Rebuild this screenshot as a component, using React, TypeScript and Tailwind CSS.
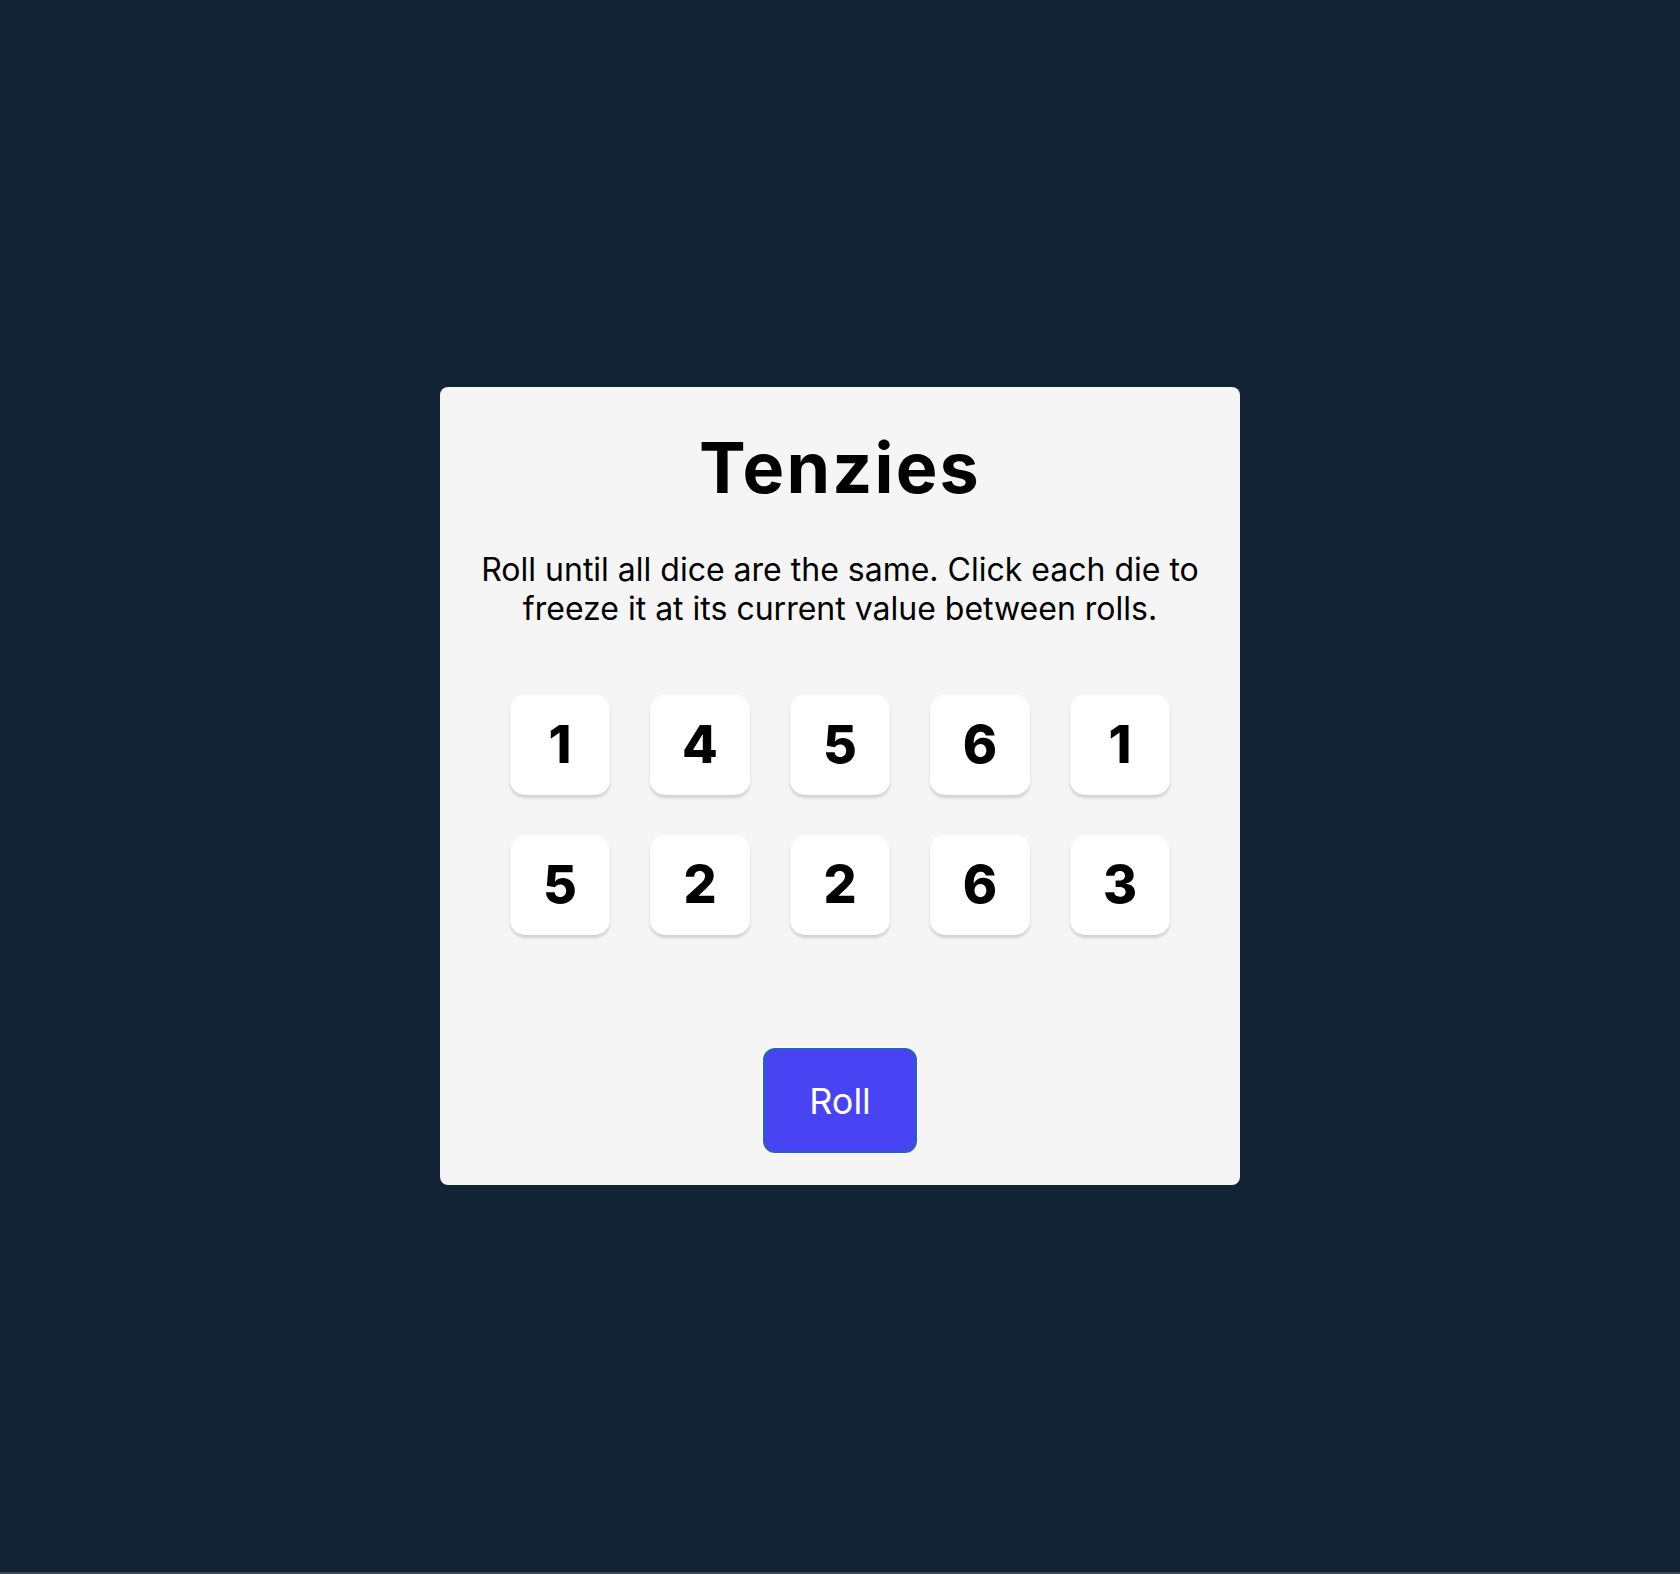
import React from 'react';

const dice = [1, 4, 5, 6, 1, 5, 2, 2, 6, 3];

export default function App() {
  return (
    <div className="min-h-[1574px] bg-[#3b4650] font-['Inter',sans-serif]">
      <main className="h-[1572px] bg-[#112334] flex items-center justify-center">
        <div className="w-[800px] bg-[#f5f5f5] rounded-lg flex flex-col items-center pt-[46px] pb-[32px]">
          <h1 className="text-[70px] leading-none font-bold tracking-[2.2px] text-black">Tenzies</h1>
          <p className="mt-[47px] text-[32px] leading-[39px] text-center text-black max-w-[750px]">
            Roll until all dice are the same. Click each die to freeze it at its current value between rolls.
          </p>
          <div className="mt-[67px] grid grid-cols-5 gap-[40px]">
            {dice.map((d, i) => (
              <button
                key={i}
                className="w-[100px] h-[100px] bg-white rounded-[15px] shadow-[0_3px_3px_rgba(0,0,0,0.15)] flex items-center justify-center text-[52px] font-extrabold text-black"
              >
                {d}
              </button>
            ))}
          </div>
          <button className="mt-[113px] w-[154px] h-[105px] rounded-[12px] bg-[#4843f3] border-2 border-[#2461c2] ring-1 ring-white text-white text-[36px] font-normal">
            Roll
          </button>
        </div>
      </main>
    </div>
  );
}
